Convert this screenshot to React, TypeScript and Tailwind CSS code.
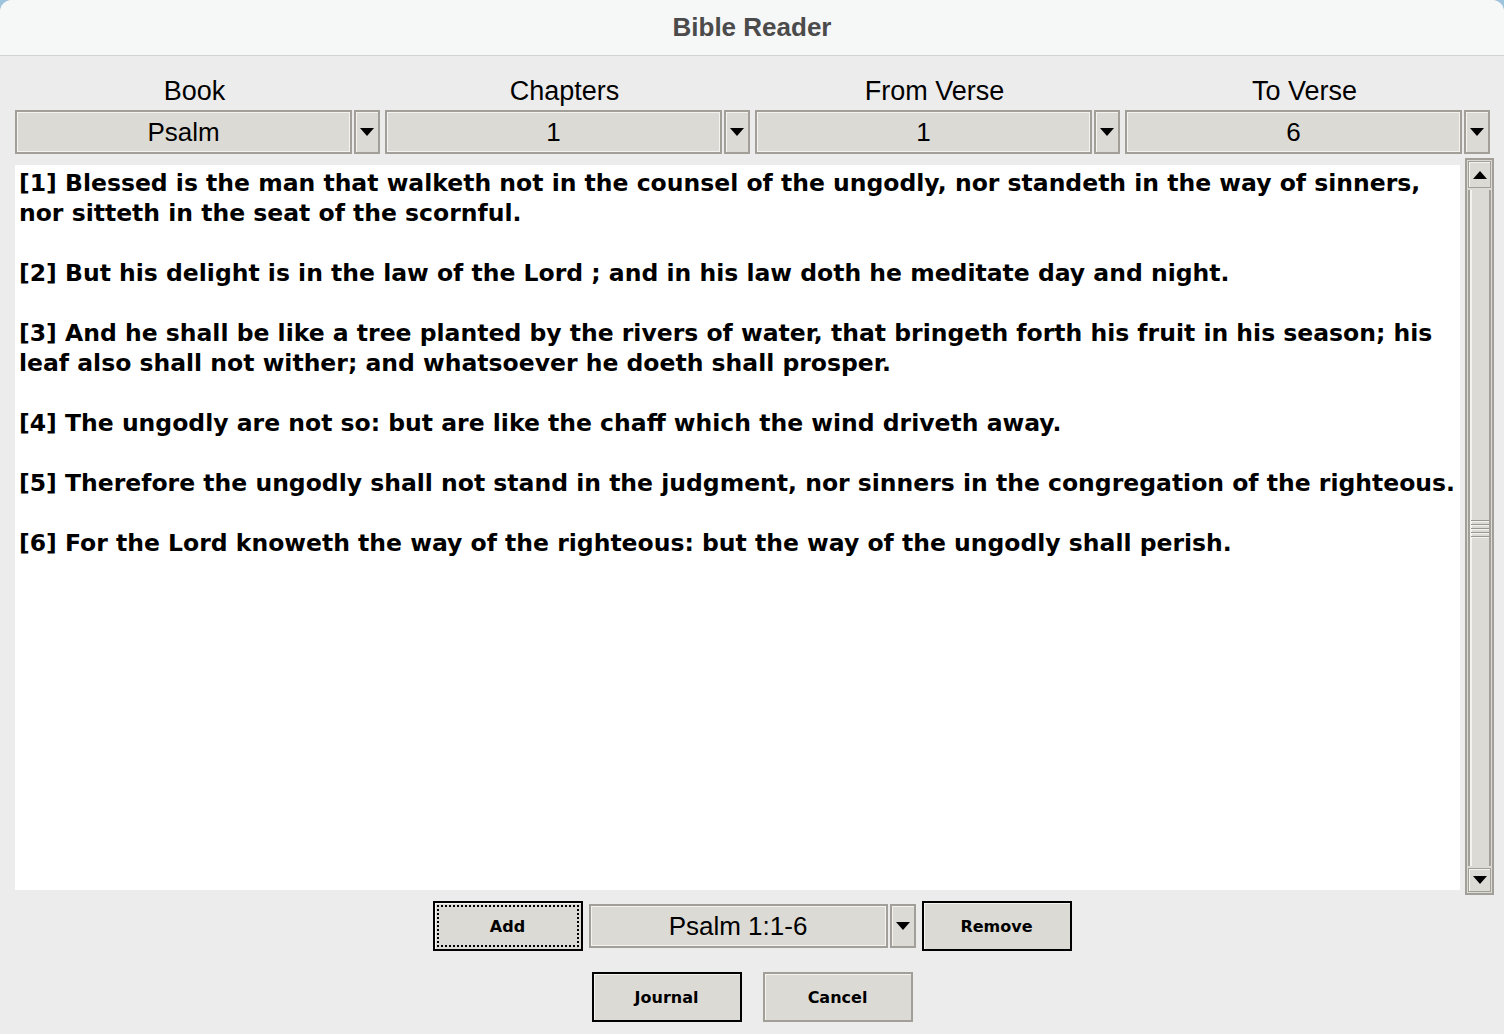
import React from "react";

const verses = [
  "[1] Blessed is the man that walketh not in the counsel of the ungodly, nor standeth in the way of sinners, nor sitteth in the seat of the scornful.",
  "[2] But his delight is in the law of the Lord ; and in his law doth he meditate day and night.",
  "[3] And he shall be like a tree planted by the rivers of water, that bringeth forth his fruit in his season; his leaf also shall not wither; and whatsoever he doeth shall prosper.",
  "[4] The ungodly are not so: but are like the chaff which the wind driveth away.",
  "[5] Therefore the ungodly shall not stand in the judgment, nor sinners in the congregation of the righteous.",
  "[6] For the Lord knoweth the way of the righteous: but the way of the ungodly shall perish.",
];

function Arrow({ up = false }: { up?: boolean }) {
  return (
    <svg width="14" height="8" viewBox="0 0 14 8">
      <path d={up ? "M0 8 L7 0 L14 8 Z" : "M0 0 L14 0 L7 8 Z"} fill="#000" />
    </svg>
  );
}

function Combo({ value, className = "" }: { value: string; className?: string }) {
  return (
    <div className={`flex h-[44px] gap-[2px] ${className}`}>
      <div className="flex-1 flex items-center justify-center bg-[#dcdad5] border-2 border-[#a29f98] shadow-[inset_1px_1px_0_#f4f3f0,inset_-1px_-1px_0_#f4f3f0] text-[26px] text-black font-['Liberation_Sans',Arial,sans-serif]">
        {value}
      </div>
      <div className="w-[26px] flex items-center justify-center bg-[#dcdad5] border-2 border-[#a29f98] shadow-[inset_1px_1px_0_#f4f3f0]">
        <Arrow />
      </div>
    </div>
  );
}

function Btn({
  label,
  variant = "dark",
  focus = false,
  className = "",
}: {
  label: string;
  variant?: "dark" | "light";
  focus?: boolean;
  className?: string;
}) {
  return (
    <button
      className={`h-[50px] w-[150px] p-[2px] bg-[#dcdad5] border-2 ${
        variant === "dark" ? "border-black" : "border-[#a29f98]"
      } shadow-[inset_1px_1px_0_#f4f3f0] ${className}`}
    >
      <div
        className={`w-full h-full flex items-center justify-center pt-[2px] text-[16px] font-bold text-black font-['DejaVu_Sans',Verdana,sans-serif] ${
          focus ? "border-2 border-dotted border-black" : ""
        }`}
      >
        {label}
      </div>
    </button>
  );
}

export default function App() {
  return (
    <div className="w-[1504px] h-[1034px] bg-[#9ec3dc] overflow-hidden">
      <div className="w-full h-full rounded-t-[12px] overflow-hidden bg-[#ececec] flex flex-col">
        {/* title bar */}
        <div className="h-[56px] shrink-0 bg-[#f6f7f7] border-b border-[#d2d2d2] flex items-center justify-center">
          <span className="text-[26px] font-bold text-[#4b4b4b] font-['Liberation_Sans',Arial,sans-serif]">
            Bible Reader
          </span>
        </div>

        {/* selectors */}
        <div className="grid grid-cols-4 gap-[5px] pl-[15px] pr-[14px] pt-[15px]">
          {[
            ["Book", "Psalm"],
            ["Chapters", "1"],
            ["From Verse", "1"],
            ["To Verse", "6"],
          ].map(([label, value]) => (
            <div key={label} className="flex flex-col">
              <div className="h-[39px] pt-[2px] pr-[6px] flex items-center justify-center text-[27px] text-black font-['Liberation_Sans',Arial,sans-serif]">
                {label}
              </div>
              <Combo value={value} />
            </div>
          ))}
        </div>

        {/* text + scrollbar */}
        <div className="flex pl-[15px] pr-[10px] pt-[4px] h-[741px]">
          <div className="flex-1 mt-[7px] mb-[5px] bg-white pl-[4px] pr-[2px] pt-[3px] text-[23.5px] leading-[30px] font-bold text-black font-['DejaVu_Sans',Verdana,sans-serif]">
            {verses.map((v, i) => (
              <p key={i} className="mb-[30px]">
                {v}
              </p>
            ))}
          </div>
          <div className="w-[29px] ml-[5px] border-2 border-[#a29f98] bg-[#dcdad5] flex flex-col p-[1px]">
            <div className="h-[27px] flex items-center justify-center border border-[#a29f98] shadow-[inset_1px_1px_0_#f4f3f0]">
              <Arrow up />
            </div>
            <div className="flex-1 my-[2px] border-x-2 border-[#a29f98] shadow-[inset_2px_0_0_#f4f3f0] flex items-center justify-center">
              <div className="flex flex-col gap-[3px] w-[18px]">
                {[0, 1, 2, 3, 4].map((i) => (
                  <div key={i} className="h-[1px] bg-[#9a978f] shadow-[0_1px_0_#f4f3f0]" />
                ))}
              </div>
            </div>
            <div className="h-[24px] flex items-center justify-center border border-[#a29f98] shadow-[inset_1px_1px_0_#f4f3f0]">
              <Arrow />
            </div>
          </div>
        </div>

        {/* add / remove row */}
        <div className="flex justify-center items-center gap-[6px] mt-[6px]">
          <Btn label="Add" focus />
          <Combo value="Psalm 1:1-6" className="w-[327px]" />
          <Btn label="Remove" />
        </div>

        {/* journal / cancel row */}
        <div className="flex justify-center gap-[21px] mt-[21px]">
          <Btn label="Journal" />
          <Btn label="Cancel" variant="light" />
        </div>
      </div>
    </div>
  );
}
